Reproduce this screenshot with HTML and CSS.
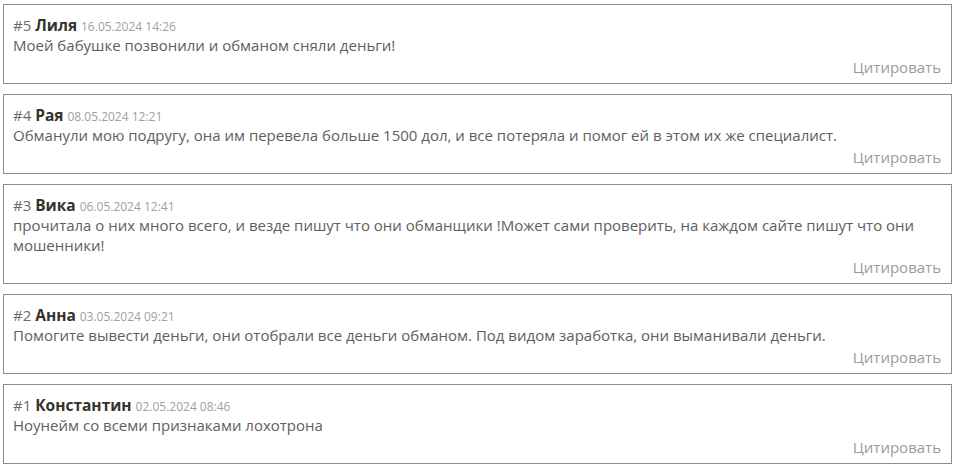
FILE: index.html
```html
<!DOCTYPE html>
<html lang="ru">
<head>
<meta charset="utf-8">
<link rel="stylesheet" href="styles.css">
</head>
<body>
<div class="list">
  <div class="comment">
    <div class="head"><span class="num">#5</span> <span class="name">Лиля</span> <span class="date">16.05.2024 14:26</span></div>
    <div class="text">Моей бабушке позвонили и обманом сняли деньги!</div>
    <div class="quote">Цитировать</div>
  </div>
  <div class="comment">
    <div class="head"><span class="num">#4</span> <span class="name">Рая</span> <span class="date">08.05.2024 12:21</span></div>
    <div class="text">Обманули мою подругу, она им перевела больше 1500 дол, и все потеряла и помог ей в этом их же специалист.</div>
    <div class="quote">Цитировать</div>
  </div>
  <div class="comment">
    <div class="head"><span class="num">#3</span> <span class="name">Вика</span> <span class="date">06.05.2024 12:41</span></div>
    <div class="text">прочитала о них много всего, и везде пишут что они обманщики !Может сами проверить, на каждом сайте пишут что они мошенники!</div>
    <div class="quote">Цитировать</div>
  </div>
  <div class="comment">
    <div class="head"><span class="num">#2</span> <span class="name">Анна</span> <span class="date">03.05.2024 09:21</span></div>
    <div class="text">Помогите вывести деньги, они отобрали все деньги обманом. Под видом заработка, они выманивали деньги.</div>
    <div class="quote">Цитировать</div>
  </div>
  <div class="comment">
    <div class="head"><span class="num">#1</span> <span class="name">Константин</span> <span class="date">02.05.2024 08:46</span></div>
    <div class="text">Ноунейм со всеми признаками лохотрона</div>
    <div class="quote">Цитировать</div>
  </div>
</div>
</body>
</html>
```
FILE: styles.css
```css
html, body {
  margin: 0;
  padding: 0;
  background: #ffffff;
}
body {
  font-family: "Open Sans", "Noto Sans", sans-serif;
  color: #5e5e5e;
}
.list {
  display: flex;
  flex-direction: column;
  gap: 10px;
  padding: 4px 2px 0 3px;
}
.comment {
  border: 1px solid #8c8c8c;
  padding: 10px 10px 6px 9px;
}
.head {
  height: 20px;
  font-size: 15px;
  line-height: 20px;
  white-space: nowrap;
}
.head span {
  line-height: 1;
}
.num {
  color: #6a6a6a;
}
.name {
  font-weight: 700;
  font-size: 15.5px;
  color: #33332a;
}
.date {
  font-size: 12px;
  color: #a0a0a0;
}
.text {
  font-size: 15px;
  line-height: 20px;
  color: #5e5e5e;
}
.quote {
  font-size: 15px;
  line-height: 20px;
  margin-top: 2px;
  text-align: right;
  color: #9b9b9b;
}
```
